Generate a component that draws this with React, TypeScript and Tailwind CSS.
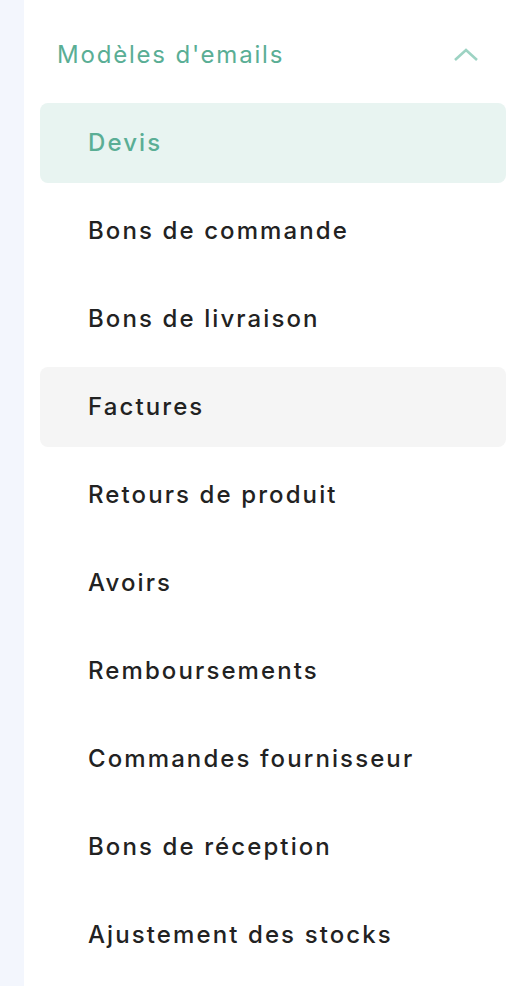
import React from "react"

const items = [
  "Devis",
  "Bons de commande",
  "Bons de livraison",
  "Factures",
  "Retours de produit",
  "Avoirs",
  "Remboursements",
  "Commandes fournisseur",
  "Bons de réception",
  "Ajustement des stocks",
]

export default function App() {
  return (
    <div className="flex min-h-[986px] w-full bg-white" style={{ fontFamily: "Inter, 'Noto Sans', sans-serif" }}>
      <div className="w-6 shrink-0 bg-[#f3f6fd]" />
      <div className="flex flex-1 flex-col pl-4 pr-2 pt-[31px]">
        <button className="flex h-12 items-center justify-between pl-[17px] pr-[27px]">
          <span className="text-[24px] font-normal tracking-[1.8px] text-[#5aae95]">Modèles d'emails</span>
          <svg width="26" height="16" viewBox="0 0 26 16" fill="none">
            <path d="M2 13L13 3L24 13" stroke="#9dd3c3" strokeWidth="2.6" />
          </svg>
        </button>
        <div className="mt-6 flex flex-col gap-2">
          {items.map((label, i) => (
            <div
              key={label}
              className={
                "flex h-20 items-center rounded-lg pl-12 text-[24px] font-medium tracking-[2.1px] " +
                (i === 0
                  ? "bg-[#e8f4f1] text-[#5aae95]"
                  : i === 3
                  ? "bg-[#f5f5f5] text-[#222222]"
                  : "text-[#222222]")
              }
            >
              {label}
            </div>
          ))}
        </div>
      </div>
    </div>
  )
}
